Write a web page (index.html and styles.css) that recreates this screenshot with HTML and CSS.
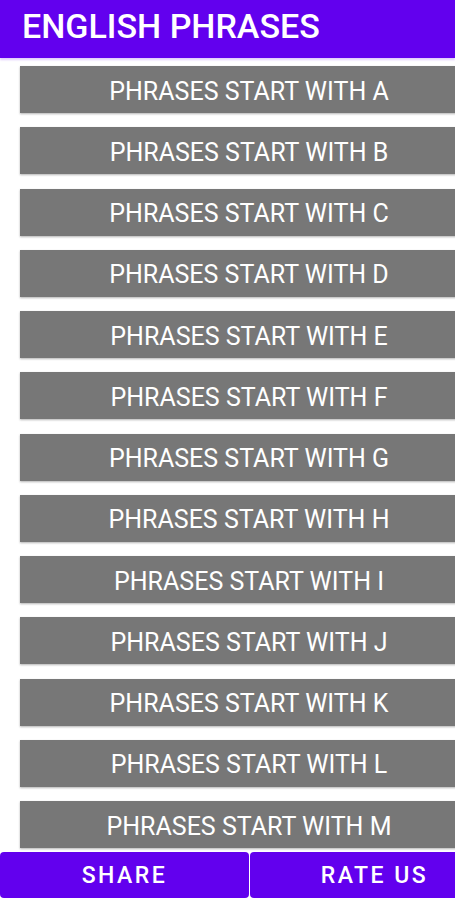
FILE: index.html
```html
<!DOCTYPE html>
<html>
<head>
<meta charset="utf-8">
<link rel="stylesheet" href="styles.css">
</head>
<body>
<div class="app">
  <header class="topbar"><h1 class="title">ENGLISH PHRASES</h1></header>
  <main class="list">
    <div class="item">PHRASES START WITH A</div>
    <div class="item">PHRASES START WITH B</div>
    <div class="item">PHRASES START WITH C</div>
    <div class="item">PHRASES START WITH D</div>
    <div class="item">PHRASES START WITH E</div>
    <div class="item">PHRASES START WITH F</div>
    <div class="item">PHRASES START WITH G</div>
    <div class="item">PHRASES START WITH H</div>
    <div class="item">PHRASES START WITH I</div>
    <div class="item">PHRASES START WITH J</div>
    <div class="item">PHRASES START WITH K</div>
    <div class="item">PHRASES START WITH L</div>
    <div class="item">PHRASES START WITH M</div>
  </main>
  <footer class="bottom">
    <div class="btn">SHARE</div>
    <div class="btn">RATE US</div>
  </footer>
</div>
</body>
</html>
```
FILE: styles.css
```css
html, body {
  margin: 0;
  padding: 0;
  background: #ffffff;
  overflow: hidden;
}
.app {
  width: 455px;
  height: 900px;
  display: flex;
  flex-direction: column;
  font-family: Roboto, "Noto Sans", sans-serif;
  overflow: hidden;
}
.topbar {
  height: 58px;
  background: #6200ee;
  box-shadow: 0 2px 2px rgba(98, 0, 238, 0.2);
  display: flex;
  align-items: center;
  padding: 0 0 6px 22px;
  box-sizing: border-box;
  flex: none;
}
.title {
  margin: 0;
  color: #ffffff;
  font-size: 34px;
  font-weight: 500;
  letter-spacing: 0;
}
.list {
  display: flex;
  flex-direction: column;
  gap: 14.25px;
  padding: 8px 0 0 20px;
  flex: none;
}
.item {
  width: 458px;
  height: 47px;
  box-sizing: border-box;
  padding-top: 3px;
  background: #777777;
  color: #ffffff;
  font-size: 25px;
  display: flex;
  align-items: center;
  justify-content: center;
  box-shadow: 0 1px 2px rgba(0,0,0,0.3);
  flex: none;
}
.bottom {
  margin-top: auto;
  margin-bottom: 2px;
  height: 46px;
  display: flex;
  gap: 1px;
  flex: none;
}
.btn {
  width: 249px;
  flex: none;
  background: #6200ee;
  color: #ffffff;
  font-size: 23px;
  font-weight: 500;
  letter-spacing: 2.5px;
  display: flex;
  align-items: center;
  justify-content: center;
  border-radius: 4px;
}
```
